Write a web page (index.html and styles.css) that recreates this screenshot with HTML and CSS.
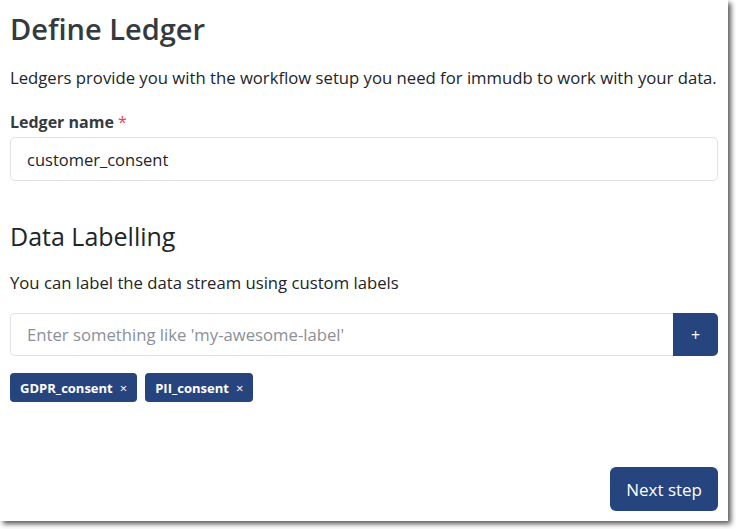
FILE: index.html
```html
<!DOCTYPE html>
<html>
<head>
<meta charset="utf-8">
<link rel="stylesheet" href="styles.css">
</head>
<body>
<div class="frame">
  <h1 class="title">Define Ledger</h1>
  <p class="lead">Ledgers provide you with the workflow setup you need for immudb to work with your data.</p>
  <label class="label">Ledger name <span class="req">*</span></label>
  <div class="input">customer_consent</div>
  <h2 class="subtitle">Data Labelling</h2>
  <p class="text">You can label the data stream using custom labels</p>
  <div class="group">
    <div class="input placeholder">Enter something like 'my-awesome-label'</div>
    <button class="add">+</button>
  </div>
  <div class="tags">
    <span class="tag">GDPR_consent <span class="x">×</span></span>
    <span class="tag">PII_consent <span class="x">×</span></span>
  </div>
  <div class="footer">
    <button class="next">Next step</button>
  </div>
</div>
</body>
</html>
```
FILE: styles.css
```css
html, body { margin: 0; padding: 0; background: #fff; }
body { width: 736px; height: 529px; overflow: hidden; font-family: "Open Sans", sans-serif; color: #212529; }
.frame {
  width: 728px; height: 521px; box-sizing: border-box;
  background: #fff;
  box-shadow: 3px 3px 5px rgba(0,0,0,0.65);
  padding: 10px 10px 0 10px;
  display: flex; flex-direction: column;
}
.title { margin: 0; font-size: 29px; font-weight: 600; color: #343a40; line-height: 38px; }
.lead { margin: 18px 0 0; font-size: 16.7px; line-height: 24px; }
.label { margin-top: 20px; font-size: 16px; font-weight: 700; line-height: 24px; color: #343a40; }
.req { color: #e0464e; font-weight: 400; }
.input {
  margin-top: 3px; height: 44px; box-sizing: border-box;
  border: 1px solid #dee2e6; border-radius: 5px;
  padding: 0 16px; display: flex; align-items: center; font-size: 16.5px;
}
.subtitle { margin: 39px 0 0; font-size: 25px; font-weight: 400; line-height: 32px; }
.text { margin: 19px 0 0; font-size: 16.7px; line-height: 24px; }
.group { display: flex; margin-top: 18px; }
.group .input { margin: 0; flex: 1; height: 43px; border-radius: 5px 0 0 5px; border-right: 0; font-size: 16.7px; }
.placeholder { color: #8a9099; }
.add { width: 45px; height: 43px; border: 0; border-radius: 0 5px 5px 0; background: #26457f; color: #fff; font-size: 16px; font-family: inherit; padding: 0; }
.tags { display: flex; gap: 8px; margin-top: 17px; }
.tag { background: #26457f; color: #fff; font-size: 13px; font-weight: 700; height: 29px; display: flex; align-items: center; padding: 0 10px; border-radius: 4px; box-sizing: border-box; }
.x { margin-left: 7px; font-weight: 400; }
.footer { display: flex; justify-content: flex-end; margin-top: 65px; }
.next { background: #26457f; color: #fff; border: 0; border-radius: 6px; height: 44px; padding: 0 16px; font-size: 17px; font-family: inherit; }
```
